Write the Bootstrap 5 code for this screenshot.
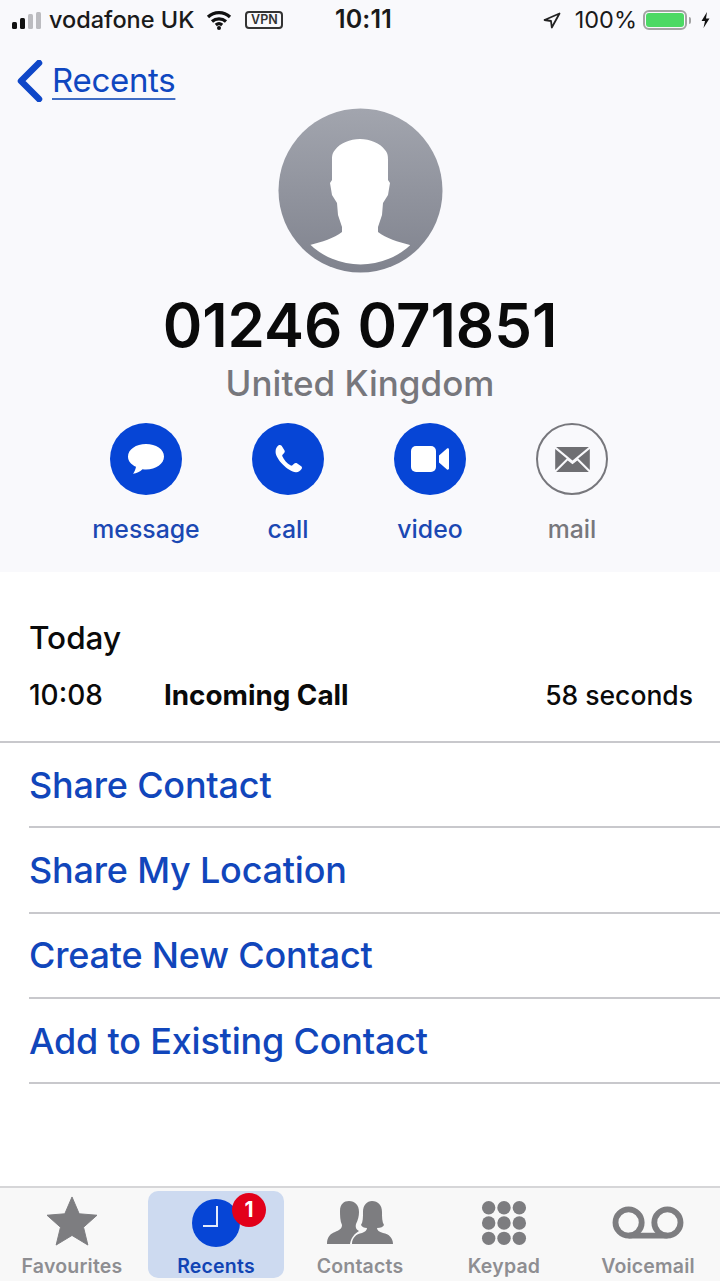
<!DOCTYPE html>
<html lang="en">
<head>
  <meta charset="UTF-8" />
  <meta name="viewport" content="width=device-width, initial-scale=1.0"/>
  <title>Recents - 01246 071851</title>
  <link rel="stylesheet" href="https://cdn.jsdelivr.net/npm/bootstrap@5.3.0/dist/css/bootstrap.min.css" />
  <style>
    body { font-family: Inter, "Liberation Sans", sans-serif; background: #fff; color: #0a0a0a; }
    .phone-page { width: 720px; height: 1281px; overflow: hidden; }
    .top-panel { height: 572px; background: #f9f9fc; }
    .status-row { height: 40px; padding: 0 10px 0 12px; font-size: 23.5px; color: #1a1a1a; }
    .status-left { width: 321px; gap: 8px; font-weight: 500; }
    .status-time { font-weight: 600; width: 61px; text-align: center; font-size: 25px; letter-spacing: .2px; }
    .status-right { gap: 6px; margin-left: auto; }
    .signal-bars { gap: 3px; align-items: flex-end; height: 17px; }
    .signal-bars i { display: block; width: 5px; border-radius: 1.5px; background: #111; }
    .signal-bars i.off { background: #bcbcc0; }
    .vpn-tag { border: 2px solid #333; border-radius: 4px; font-size: 12.5px; line-height: 14px; padding: 0 3px; font-weight: 600; margin-left: 5px; color: #333; width: 38px; text-align: center; }
    .batt-box { width: 44px; height: 20px; border: 2px solid #a3a3a3; border-radius: 6px; padding: 1px; }
    .batt-box span { display: block; height: 100%; background: #4cd964; border-radius: 3px; }
    .batt-nub { width: 2px; height: 7px; background: #a3a3a3; margin-left: -4px; border-radius: 0 2px 2px 0; }
    .back-row { height: 68px; padding: 14px 0 0 16px; gap: 8px; }
    .back-link { font-size: 33px; color: #0f47c0; text-decoration: underline; text-decoration-thickness: 2px; text-underline-offset: 6px; text-decoration-color: #3f6cc4; letter-spacing: -.3px; }
    .avatar-wrap { height: 164px; }
    .phone-number { font-size: 60px; line-height: 70px; font-weight: 600; margin-top: 18px; letter-spacing: 0; }
    .phone-region { font-size: 35px; line-height: 44px; color: #77777c; font-weight: 500; margin-top: 1px; }
    .action-row { margin-top: 18px; padding-left: 75px; }
    .action-item { width: 142px; font-size: 24.800px; font-weight: 500; color: #1b48b3; }
    .action-item.muted-item { color: #77777c; }
    .action-circle { width: 72px; height: 72px; border-radius: 50%; background: #0645d6; margin-bottom: 16px; }
    .action-circle.outline-one { background: transparent; border: 2px solid #77777c; }
    .call-day { padding: 46px 27px 0 29px; }
    .call-day-title { font-size: 31.500px; line-height: 40px; font-weight: 500; }
    .call-line { font-size: 26.500px; line-height: 40px; margin-top: 17px; font-weight: 500; }
    .call-time { width: 135px; font-size: 28px; }
    .call-type { font-weight: 700; font-size: 27.800px; }
    .call-list { margin-top: 26px; border-top: 2px solid #c8c8cc; border-radius: 0; }
    .call-list .list-group-item { height: 85.330px; padding: 0; margin-left: 29px; border: 0; border-bottom: 2px solid #c8c8cc; border-radius: 0; font-size: 36px; font-weight: 500; color: #1146bb; background: transparent; letter-spacing: -.2px; }
    .tab-strip { height: 95px; margin-top: auto; background: #f8f8f8; border-top: 2px solid #d6d6d8; padding: 3px 0; }
    .tab-cell { flex: 0 0 144px; position: relative; font-size: 19.500px; line-height: 24px; font-weight: 600; color: #8e8e92; letter-spacing: .2px; }
    .tab-cell.on-tab { color: #1144b4; padding: 0 4px; }
    .tab-cell.on-tab > .tab-fill { width: 100%; height: 100%; background: #cddaf0; border-radius: 10px; }
    .tab-icon { height: 65px; }
    .star-icon { margin-bottom: 4px; }
    .count-pill { position: absolute; top: 2px; left: 88px; width: 34px; height: 34px; border-radius: 50%; background: #e2001a; color: #fff; font-size: 21px; line-height: 34px; font-weight: 700; text-align: center; letter-spacing: 0; }
  </style>
</head>
<body>
  <div class="phone-page d-flex flex-column">
    <div class="top-panel">
      <!-- status bar -->
      <div class="status-row d-flex align-items-center">
        <div class="status-left d-flex align-items-center">
          <div class="signal-bars d-flex">
            <i style="height:7px"></i><i style="height:11px"></i><i class="off" style="height:15px"></i><i class="off" style="height:17px"></i>
          </div>
          <span>vodafone UK</span>
          <svg width="26" height="20" viewBox="0 0 26 20" class="ms-1"><path d="M2 7a16 16 0 0 1 22 0M6 11.500a10.500 10.500 0 0 1 14 0M9.800 15a5 5 0 0 1 6.400 0" fill="none" stroke="#111" stroke-width="3.200"/><circle cx="13" cy="18" r="2" fill="#111"/></svg>
          <span class="vpn-tag">VPN</span>
        </div>
        <div class="status-time">10:11</div>
        <div class="status-right d-flex align-items-center">
          <svg width="18" height="17" viewBox="0 0 18 17" class="me-2"><path d="M16.500 1.500 1.500 8l6.500 1 .8 6.500z" fill="none" stroke="#222" stroke-width="1.800" stroke-linejoin="round"/></svg>
          <span>100%</span>
          <div class="batt-box"><span></span></div>
          <div class="batt-nub"></div>
          <svg width="9" height="16" viewBox="0 0 9 16" class="ms-1"><path d="M6 0 .5 9H4L2.500 16 8.500 6.500H5z" fill="#111"/></svg>
        </div>
      </div>

      <div class="back-row d-flex align-items-center">
        <svg width="28" height="42" viewBox="0 0 28 42"><path d="M23 3 5 21l18 18" fill="none" stroke="#0f47c8" stroke-width="6.500" stroke-linecap="round" stroke-linejoin="round"/></svg>
        <a href="#" class="back-link">Recents</a>
      </div>

      <div class="avatar-wrap d-flex justify-content-center">
        <svg width="165" height="165" viewBox="0 0 165 165">
          <defs>
            <linearGradient id="avatarFill" x1="0" y1="0" x2="0" y2="1"><stop offset="0" stop-color="#a2a5ae"/><stop offset="1" stop-color="#80838e"/></linearGradient>
            <clipPath id="avatarClip"><circle cx="82.500" cy="82.500" r="74"/></clipPath>
          </defs>
          <circle cx="82.500" cy="82.500" r="82" fill="url(#avatarFill)"/>
          <path clip-path="url(#avatarClip)" d="M82 31C72 31 62 35 57 42 54 45 54 49 54 52V72L52 75 54 87 59 95 60 107 64 119V124C56 130 44 134 32 137L20 165H144L132 137C120 134 108 130 100 124V119L104 107 105 95 110 87 112 75 110 72V52C110 49 110 45 107 42 102 35 92 31 82 31z" fill="#fff"/>
        </svg>
      </div>

      <div class="phone-number text-center">01246 071851</div>
      <div class="phone-region text-center">United Kingdom</div>

      <div class="action-row d-flex">
        <div class="action-item d-flex flex-column align-items-center">
          <div class="action-circle d-flex align-items-center justify-content-center">
            <svg width="36" height="31" viewBox="0 0 36 31"><path d="M18 0C8 0 0 5.500 0 12.500c0 4.500 3 8 8 10.300-.4 2.800-1.800 5.500-3 7 3.500-.2 7-2 9.500-4.500 1.200.2 2.300.2 3.500.2 10 0 18-5.600 18-13S28 0 18 0z" fill="#fff"/></svg>
          </div>
          <span>message</span>
        </div>
        <div class="action-item d-flex flex-column align-items-center">
          <div class="action-circle d-flex align-items-center justify-content-center">
            <svg width="32" height="32" viewBox="0 0 34 34"><path d="M7 2.500c1-.8 2.500-.6 3.200.5l3 4.800c.6 1 .5 2-.3 2.800l-1.700 1.800c-.5.500-.5 1-.2 1.700 1.500 3.500 5 7.800 9 9.800.7.300 1.200.2 1.700-.3l2-1.800c.8-.7 1.900-.8 2.800-.2l4.500 3c1 .7 1.200 2 .4 3-1.500 2-3.500 3.600-6 3.400C17 30.500 4 17 3.800 9.500 3.700 6.500 5 4 7 2.500z" fill="#fff"/></svg>
          </div>
          <span>call</span>
        </div>
        <div class="action-item d-flex flex-column align-items-center">
          <div class="action-circle d-flex align-items-center justify-content-center">
            <svg width="38" height="26" viewBox="0 0 38 26"><rect x="0" y="0" width="25" height="26" rx="5" fill="#fff"/><path d="M28 9.500 36 2.500c1-.5 2 0 2 1v19c0 1-1 1.500-2 1l-8-7z" fill="#fff"/></svg>
          </div>
          <span>video</span>
        </div>
        <div class="action-item muted-item d-flex flex-column align-items-center">
          <div class="action-circle outline-one d-flex align-items-center justify-content-center">
            <svg width="35" height="25" viewBox="0 0 36 26" fill="#6f6f73"><path d="M1 0h34L18 14z"/><path d="M0 2v22l12-12zM36 2v22L24 12z"/><path d="M1 26h34L23 14l-5 4-5-4z"/></svg>
          </div>
          <span>mail</span>
        </div>
      </div>
    </div>

    <div class="call-day">
      <div class="call-day-title">Today</div>
      <div class="call-line d-flex align-items-center">
        <span class="call-time">10:08</span>
        <span class="call-type flex-grow-1">Incoming Call</span>
        <span>58 seconds</span>
      </div>
    </div>

    <div class="call-list list-group">
      <a href="#" class="list-group-item d-flex align-items-center">Share Contact</a>
      <a href="#" class="list-group-item d-flex align-items-center">Share My Location</a>
      <a href="#" class="list-group-item d-flex align-items-center">Create New Contact</a>
      <a href="#" class="list-group-item d-flex align-items-center">Add to Existing Contact</a>
    </div>

    <div class="tab-strip d-flex">
      <div class="tab-cell d-flex flex-column align-items-center">
        <div class="tab-icon d-flex align-items-center justify-content-center">
          <svg class="star-icon" width="52" height="50" viewBox="0 0 54 52"><path d="M27 1l7.500 17.500L53 20 39 32.500 43.500 51 27 41 10.500 51 15 32.500 1 20l18.500-1.500z" fill="#7d7d80" stroke="#7d7d80" stroke-linejoin="round"/></svg>
        </div>
        <span>Favourites</span>
      </div>
      <div class="tab-cell on-tab">
        <div class="tab-fill d-flex flex-column align-items-center">
          <div class="tab-icon d-flex align-items-center justify-content-center">
            <svg width="48" height="48" viewBox="0 0 48 48"><circle cx="24" cy="24" r="24" fill="#0645d6"/><path d="M25 7v20H11" fill="none" stroke="#e4ebfb" stroke-width="2"/></svg>
          </div>
          <span>Recents</span>
        </div>
        <span class="count-pill">1</span>
      </div>
      <div class="tab-cell d-flex flex-column align-items-center">
        <div class="tab-icon d-flex align-items-center justify-content-center">
          <svg width="66" height="43" viewBox="0 0 66 43" fill="#7d7d80"><path d="M0 43C0 36 3 33 8 31 12 29 15 28 15 24 13 20 13 14 13 10 13 3 17 0 22 0 28 0 32 4 32 11 32 15 31 19 29 23 28 27 30 29 32 30 27 33 24 37 23 43z"/><path d="M25 43C25 37 29 33 35 32 38 31 40 29 40 27 37 27 35 26 34 24 36 21 36 16 36 11 36 4 40 0 45 0 51 0 55 4 55 11 55 16 55 21 57 24 56 26 54 27 50 27 50 29 52 31 56 32 62 33 66 37 66 43z"/></svg>
        </div>
        <span>Contacts</span>
      </div>
      <div class="tab-cell d-flex flex-column align-items-center">
        <div class="tab-icon d-flex align-items-center justify-content-center">
          <svg width="46" height="46" viewBox="0 0 48 48" fill="#7d7d80"><circle cx="8" cy="8" r="7"/><circle cx="24" cy="8" r="7"/><circle cx="40" cy="8" r="7"/><circle cx="8" cy="24" r="7"/><circle cx="24" cy="24" r="7"/><circle cx="40" cy="24" r="7"/><circle cx="8" cy="40" r="7"/><circle cx="24" cy="40" r="7"/><circle cx="40" cy="40" r="7"/></svg>
        </div>
        <span>Keypad</span>
      </div>
      <div class="tab-cell d-flex flex-column align-items-center">
        <div class="tab-icon d-flex align-items-center justify-content-center">
          <svg width="72" height="33" viewBox="0 0 74 34"><circle cx="17" cy="17" r="13.500" fill="none" stroke="#7d7d80" stroke-width="6"/><circle cx="57" cy="17" r="13.500" fill="none" stroke="#7d7d80" stroke-width="6"/><path d="M17 30.500h40" stroke="#7d7d80" stroke-width="6"/></svg>
        </div>
        <span>Voicemail</span>
      </div>
    </div>
  </div>
  <script src="https://cdn.jsdelivr.net/npm/bootstrap@5.3.0/dist/js/bootstrap.bundle.min.js"></script>
</body>
</html>
